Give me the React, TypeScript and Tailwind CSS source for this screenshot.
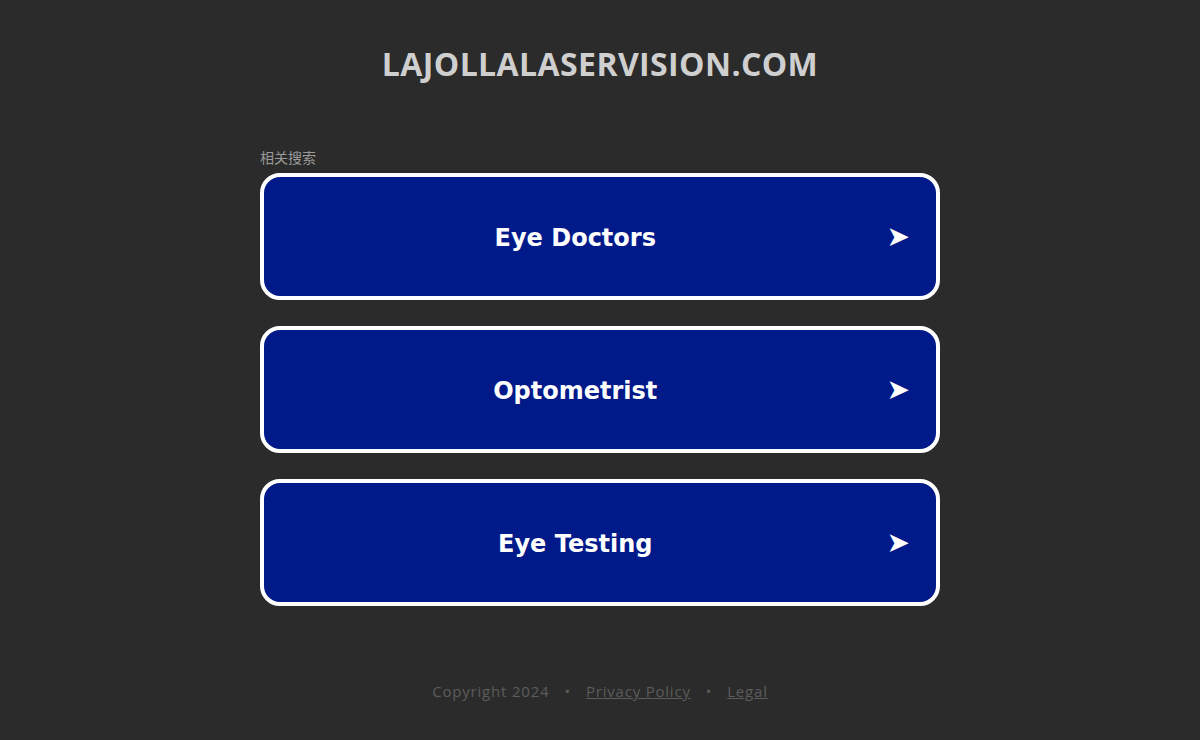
const links = ['Eye Doctors', 'Optometrist', 'Eye Testing'];

function LinkCard({ label }: { label: string }) {
  return (
    <a
      href="#"
      className="flex h-[127px] items-center rounded-[20px] border-[4px] border-white bg-[#011a8a] pr-[26px] text-white"
    >
      <span className="flex-1 pt-[2px] text-center text-[24px] font-bold [font-family:'DejaVu_Sans',Verdana,sans-serif]">
        {label}
      </span>
      <span className="text-[28px] leading-none [font-family:'DejaVu_Sans',sans-serif]">➤</span>
    </a>
  );
}

export default function App() {
  return (
    <div className="flex min-h-[740px] flex-col items-center bg-[#2b2b2b] [font-family:'Open_Sans',sans-serif]">
      <h1 className="mt-[40px] text-[32px] font-bold tracking-[0.4px] text-[#cfcfcf]">
        LAJOLLALASERVISION.COM
      </h1>

      <div className="mt-[59px] w-[680px]">
        <p className="mb-[5px] text-[14px] text-[#9a9a9a] [font-family:'Noto_Sans_CJK_SC',sans-serif]">
          相关搜索
        </p>
        <div className="flex flex-col gap-[26px]">
          {links.map((l) => (
            <LinkCard key={l} label={l} />
          ))}
        </div>
      </div>

      <footer className="mt-[74px] flex items-center gap-[15px] text-[15px] tracking-[0.8px] text-[#5c5c5c]">
        <span>Copyright 2024</span>
        <span>•</span>
        <a href="#" className="underline">Privacy Policy</a>
        <span>•</span>
        <a href="#" className="underline">Legal</a>
      </footer>
    </div>
  );
}
